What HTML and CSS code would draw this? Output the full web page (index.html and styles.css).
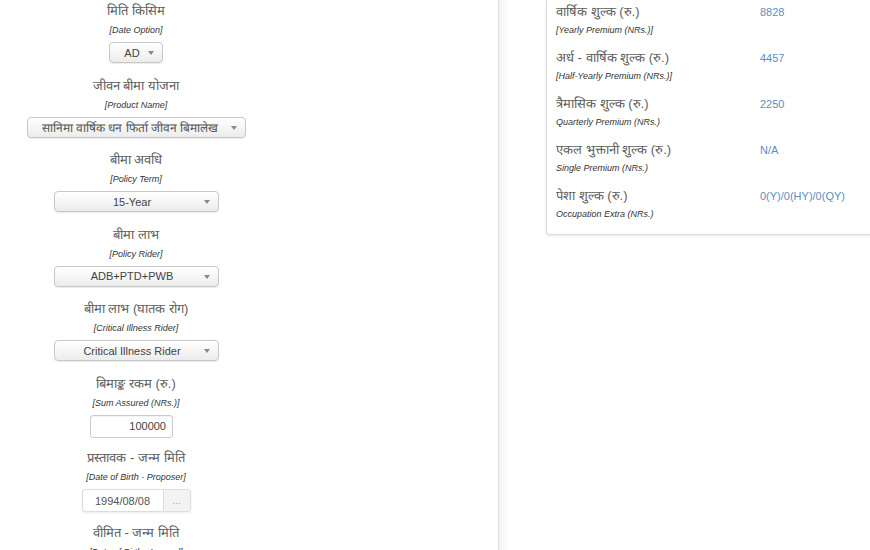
FILE: index.html
```html
<!DOCTYPE html>
<html lang="ne">
<head>
<meta charset="utf-8">
<title>Premium Calculator</title>
<link rel="stylesheet" href="styles.css">
</head>
<body>
<div class="page">
  <div class="left-pane">
    <div class="form-col">
      <div class="group">
        <div class="dev">मिति किसिम</div>
        <div class="en">[Date Option]</div>
        <div class="select w-ad"><span>AD</span><i class="caret"></i></div>
      </div>
      <div class="group">
        <div class="dev">जीवन बीमा योजना</div>
        <div class="en">[Product Name]</div>
        <div class="select w-product"><span class="dev-sel">सानिमा वार्षिक धन फिर्ता जीवन बिमालेख</span><i class="caret"></i></div>
      </div>
      <div class="group">
        <div class="dev">बीमा अवधि</div>
        <div class="en">[Policy Term]</div>
        <div class="select w-mid"><span>15-Year</span><i class="caret"></i></div>
      </div>
      <div class="group">
        <div class="dev">बीमा लाभ</div>
        <div class="en">[Policy Rider]</div>
        <div class="select w-mid"><span>ADB+PTD+PWB</span><i class="caret"></i></div>
      </div>
      <div class="group">
        <div class="dev">बीमा लाभ (घातक रोग)</div>
        <div class="en">[Critical Illness Rider]</div>
        <div class="select w-mid"><span>Critical Illness Rider</span><i class="caret"></i></div>
      </div>
      <div class="group">
        <div class="dev">बिमाङ्क रकम (रु.)</div>
        <div class="en">[Sum Assured (NRs.)]</div>
        <div class="input w-sum">100000</div>
      </div>
      <div class="group">
        <div class="dev">प्रस्तावक - जन्म मिति</div>
        <div class="en">[Date of Birth - Proposer]</div>
        <div class="date-field">
          <div class="date-input">1994/08/08</div>
          <div class="date-btn">...</div>
        </div>
      </div>
      <div class="group">
        <div class="dev">वीमित - जन्म मिति</div>
        <div class="en">[Date of Birth - Insured]</div>
      </div>
    </div>
  </div>
  <div class="right-pane">
    <div class="card">
      <div class="row">
        <div class="lbl"><div class="dev">वार्षिक शुल्क (रु.)</div><div class="en">[Yearly Premium (NRs.)]</div></div>
        <div class="val">8828</div>
      </div>
      <div class="row">
        <div class="lbl"><div class="dev">अर्ध - वार्षिक शुल्क (रु.)</div><div class="en">[Half-Yearly Premium (NRs.)]</div></div>
        <div class="val">4457</div>
      </div>
      <div class="row">
        <div class="lbl"><div class="dev">त्रैमासिक शुल्क (रु.)</div><div class="en">Quarterly Premium (NRs.)</div></div>
        <div class="val">2250</div>
      </div>
      <div class="row">
        <div class="lbl"><div class="dev">एकल भुक्तानी शुल्क (रु.)</div><div class="en">Single Premium (NRs.)</div></div>
        <div class="val">N/A</div>
      </div>
      <div class="row">
        <div class="lbl"><div class="dev">पेशा शुल्क (रु.)</div><div class="en">Occupation Extra (NRs.)</div></div>
        <div class="val">0(Y)/0(HY)/0(QY)</div>
      </div>
    </div>
  </div>
</div>
</body>
</html>
```

FILE: styles.css
```css
html, body {
  margin: 0;
  padding: 0;
  background: #fff;
  font-family: "Liberation Sans", Arial, sans-serif;
  color: #555;
}

.page {
  display: flex;
  width: 870px;
  height: 550px;
  overflow: hidden;
}

.left-pane {
  width: 498px;
  flex: none;
  border-right: 1px solid #e2e2e2;
}

.form-col {
  width: 272px;
  display: flex;
  flex-direction: column;
  align-items: center;
  text-align: center;
}

.group {
  display: flex;
  flex-direction: column;
  align-items: center;
  height: 74.5px;
}

.dev {
  font-size: 13px;
  line-height: 18px;
  color: #5e5e5e;
}

.group .dev {
  padding-top: 2px;
}

.en {
  font-size: 9px;
  line-height: 12px;
  font-style: italic;
  color: #333;
  margin-top: 4px;
}

.select {
  margin-top: 6px;
  height: 21px;
  box-sizing: border-box;
  border: 1px solid #c8c8c8;
  border-radius: 4px;
  background: linear-gradient(#ffffff, #ececec);
  box-shadow: 0 1px 1px rgba(0, 0, 0, 0.08);
  display: flex;
  align-items: center;
  justify-content: center;
  position: relative;
  font-size: 11px;
  color: #444;
}

.select span {
  padding-right: 8px;
}

.select .dev-sel {
  font-size: 12px;
  padding-right: 12px;
  color: #555;
}

.caret {
  position: absolute;
  right: 8px;
  top: 8px;
  width: 0;
  height: 0;
  border-left: 3.5px solid transparent;
  border-right: 3.5px solid transparent;
  border-top: 4px solid #888;
}

.w-ad { width: 54px; }
.w-product { width: 219px; }
.w-mid { width: 165px; }

.input {
  margin-top: 6px;
  height: 23px;
  box-sizing: border-box;
  border: 1px solid #ccc;
  border-radius: 3px;
  background: #fff;
  font-size: 11px;
  color: #444;
  display: flex;
  align-items: center;
  justify-content: flex-end;
  padding-right: 6px;
  box-shadow: inset 0 1px 1px rgba(0, 0, 0, 0.05);
}

.w-sum {
  width: 83px;
  margin-right: 9px;
}

.date-field {
  margin-top: 6px;
  display: flex;
  height: 23px;
  box-shadow: 0 1px 2px rgba(0, 0, 0, 0.08);
}

.date-input {
  width: 81px;
  box-sizing: border-box;
  border: 1px solid #ddd;
  border-right: none;
  border-radius: 3px 0 0 3px;
  font-size: 11px;
  color: #555;
  display: flex;
  align-items: center;
  justify-content: center;
}

.date-btn {
  width: 28px;
  box-sizing: border-box;
  border: 1px solid #ddd;
  border-radius: 0 3px 3px 0;
  background: #f3f3f3;
  color: #aaa;
  font-size: 10px;
  display: flex;
  align-items: center;
  justify-content: center;
}

.right-pane {
  flex: 1;
  background: linear-gradient(to right, #f1f1f1 0, #fafafa 6px, #ffffff 12px);
  padding-left: 47px;
}

.card {
  width: 340px;
  box-sizing: border-box;
  border: 1px solid #dcdcdc;
  border-top: none;
  border-radius: 0 0 3px 3px;
  box-shadow: 0 1px 3px rgba(0, 0, 0, 0.1);
  background: #fff;
  padding: 0 0 14px 9px;
}

.row {
  display: flex;
  height: 46px;
}

.row:last-child {
  height: 36px;
}

.lbl {
  width: 204px;
  flex: none;
  padding-top: 3px;
}

.lbl .en {
  margin-top: 3px;
}

.val {
  padding-top: 3px;
  line-height: 18px;
  font-size: 11px;
  color: #5b8fc2;
}
```
